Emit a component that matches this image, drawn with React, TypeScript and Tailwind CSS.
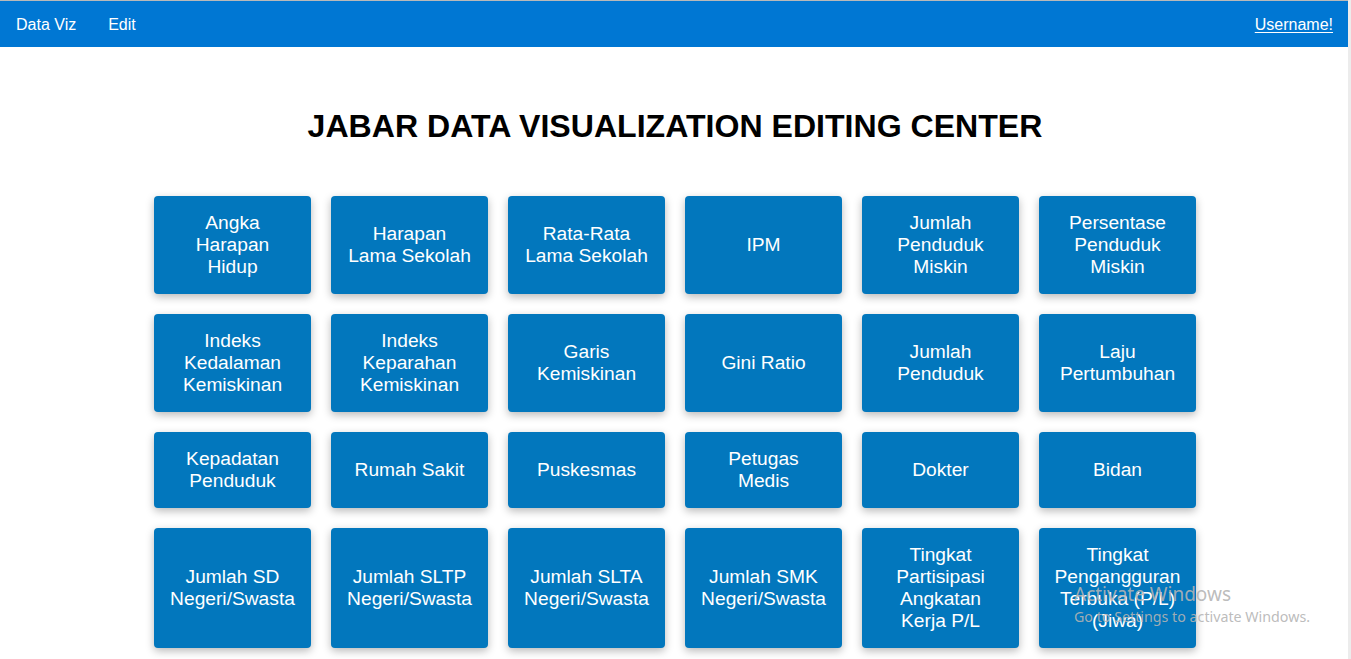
const NAV_LINKS = ["Data Viz", "Edit"];

const TILES: string[][] = [
  ["Angka", "Harapan", "Hidup"],
  ["Harapan", "Lama Sekolah"],
  ["Rata-Rata", "Lama Sekolah"],
  ["IPM"],
  ["Jumlah", "Penduduk", "Miskin"],
  ["Persentase", "Penduduk", "Miskin"],
  ["Indeks", "Kedalaman", "Kemiskinan"],
  ["Indeks", "Keparahan", "Kemiskinan"],
  ["Garis", "Kemiskinan"],
  ["Gini Ratio"],
  ["Jumlah", "Penduduk"],
  ["Laju", "Pertumbuhan"],
  ["Kepadatan", "Penduduk"],
  ["Rumah Sakit"],
  ["Puskesmas"],
  ["Petugas", "Medis"],
  ["Dokter"],
  ["Bidan"],
  ["Jumlah SD", "Negeri/Swasta"],
  ["Jumlah SLTP", "Negeri/Swasta"],
  ["Jumlah SLTA", "Negeri/Swasta"],
  ["Jumlah SMK", "Negeri/Swasta"],
  ["Tingkat", "Partisipasi", "Angkatan", "Kerja P/L"],
  ["Tingkat", "Pengangguran", "Terbuka (P/L)", "(Jiwa)"],
];

function Navbar() {
  return (
    <nav className="flex h-[47px] items-center justify-between border-t border-[#b9b9b9] bg-[#0077d3] pt-[2px] pr-[18px] text-[16px] leading-[18px] text-white">
      <div className="flex">
        {NAV_LINKS.map((l) => (
          <a key={l} href="#" className="px-4">
            {l}
          </a>
        ))}
      </div>
      <a href="#" className="underline underline-offset-2">
        Username!
      </a>
    </nav>
  );
}

function Tile({ lines }: { lines: string[] }) {
  return (
    <button className="flex flex-col items-center justify-center rounded bg-[#0277bd] py-4 text-center text-[19.2px] leading-[22px] text-white shadow-[0_3px_8px_rgba(0,0,0,0.28)]">
      {lines.map((line, i) => (
        <span key={i} className="block">
          {line}
        </span>
      ))}
    </button>
  );
}

export default function App() {
  return (
    <div className="relative min-h-[659px] overflow-hidden bg-white font-['Liberation_Sans',Arial,sans-serif]">
      <Navbar />

      <main className="flex flex-col items-center pt-[61px] pr-[1px]">
        <h1 className="text-[32.1px] font-bold leading-[37px] text-black">
          JABAR DATA VISUALIZATION EDITING CENTER
        </h1>

        <div className="mt-[51px] grid grid-cols-[repeat(6,157px)] gap-5">
          {TILES.map((lines, i) => (
            <Tile key={i} lines={lines} />
          ))}
        </div>
      </main>

      {/* os watermark + scrollbar edge, drawn over the page */}
      <div className="pointer-events-none absolute left-[1074px] top-[582px] font-['Noto_Sans','Open_Sans',sans-serif] text-[#b4b4b4]/90">
        <p className="text-[19px] leading-[25px]">Activate Windows</p>
        <p className="text-[14.25px] leading-[20px]">Go to Settings to activate Windows.</p>
      </div>
      <div className="absolute right-0 top-0 h-full w-[3px] bg-[#ececec]" />
    </div>
  );
}
